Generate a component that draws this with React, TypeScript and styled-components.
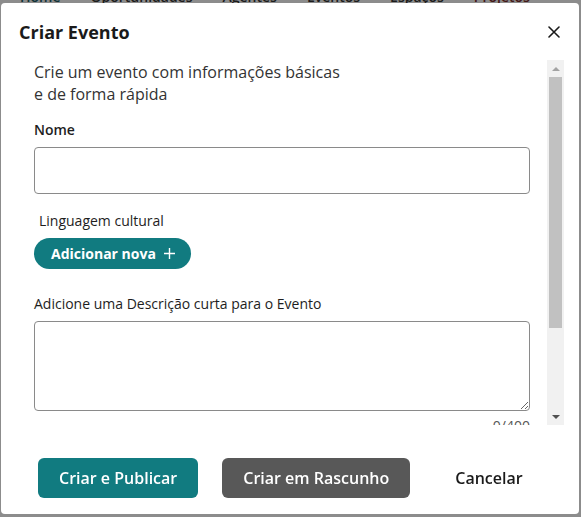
import React from "react";
import styled, { createGlobalStyle } from "styled-components";

const Global = createGlobalStyle`
  html, body { margin: 0; padding: 0; background: #fff; }
  body { font-family: "Open Sans", "Noto Sans", sans-serif; }
  * { box-sizing: border-box; }
`;

const Page = styled.div`
  width: 581px;
  height: 517px;
  background: #fff;
  overflow: hidden;
`;

const Nav = styled.nav`
  display: flex;
  gap: 30px;
  padding-left: 20px;
  height: 4px;
  overflow: hidden;
  font-size: 14px;
  font-weight: 600;
`;

const NavItem = styled.span<{ $color?: string }>`
  display: block;
  line-height: 14px;
  margin-top: -10px;
  color: ${(p) => p.$color || "#333"};
  white-space: nowrap;
`;

const Overlay = styled.div`
  position: fixed;
  inset: 0;
  background: rgba(0, 0, 0, 0.45);
  display: flex;
  align-items: center;
  padding-left: 1px;
`;

const Modal = styled.div`
  width: 578px;
  height: 511px;
  background: #fff;
  border-radius: 4px;
  display: flex;
  flex-direction: column;
  color: #1e1e1e;
`;

const Header = styled.div`
  height: 57px;
  flex: none;
  display: flex;
  align-items: center;
  justify-content: space-between;
  padding: 0 19px 0 18px;
`;

const Title = styled.h2`
  margin: 0;
  font-size: 18px;
  font-weight: 700;
  color: #1a1a1a;
`;

const CloseBtn = styled.button`
  border: 0;
  background: none;
  padding: 0;
  width: 13px;
  height: 13px;
  display: flex;
  align-items: center;
  justify-content: center;
  color: #1a1a1a;
  cursor: pointer;
`;

const Body = styled.div`
  flex: 1;
  min-height: 0;
  display: flex;
  margin-right: 15px;
`;

const ScrollContent = styled.div`
  flex: 1;
  min-width: 0;
  overflow: hidden;
  padding: 1px 17px 0 33px;
`;

const Scrollbar = styled.div`
  width: 17px;
  flex: none;
  background: #f1f1f1;
  display: flex;
  flex-direction: column;
`;

const ScrollArrow = styled.div<{ $dir: "up" | "down" }>`
  height: 17px;
  flex: none;
  display: flex;
  align-items: center;
  justify-content: center;
  color: ${(p) => (p.$dir === "up" ? "#a3a3a3" : "#505050")};
`;

const ScrollThumb = styled.div`
  height: 251px;
  margin: 0 2px;
  background: #c1c1c1;
`;

const ScrollSpacer = styled.div`
  flex: 1;
`;

const Intro = styled.p`
  margin: 0;
  font-size: 16px;
  line-height: 22px;
  color: #333;
`;

const Field = styled.div<{ $top: number }>`
  display: flex;
  flex-direction: column;
  align-items: flex-start;
  gap: 7px;
  margin-top: ${(p) => p.$top}px;
`;

const Label = styled.label<{ $weight?: number; $indent?: number }>`
  font-size: 14px;
  line-height: 20px;
  font-weight: ${(p) => p.$weight || 400};
  color: #1e1e1e;
  padding-left: ${(p) => p.$indent || 0}px;
`;

const Input = styled.input`
  width: 100%;
  height: 47px;
  border: 1px solid #8a8a8a;
  border-radius: 4px;
  font: inherit;
  font-size: 14px;
  padding: 0 12px;
  outline: none;
`;

const TextArea = styled.textarea`
  width: 100%;
  height: 90px;
  border: 1px solid #8a8a8a;
  border-radius: 4px;
  font: inherit;
  font-size: 14px;
  padding: 8px 12px;
  outline: none;
  display: block;
`;

const Counter = styled.div`
  margin-top: 5px;
  text-align: right;
  font-size: 14px;
  line-height: 20px;
  color: #555;
`;

const PillButton = styled.button`
  height: 31px;
  border: 0;
  border-radius: 16px;
  background: #117b80;
  color: #fff;
  font-family: inherit;
  font-size: 14px;
  font-weight: 700;
  padding: 0 16px 0 17px;
  display: flex;
  align-items: center;
  gap: 8px;
  cursor: pointer;
`;

const Footer = styled.div`
  height: 89px;
  flex: none;
  display: flex;
  align-items: flex-start;
  gap: 24px;
  padding: 33px 0 0 37px;
`;

const ActionButton = styled.button<{ $variant: "primary" | "secondary" | "ghost" }>`
  height: 40px;
  border: 0;
  border-radius: 6px;
  padding: 0 21px;
  font-family: inherit;
  font-size: 16px;
  font-weight: 600;
  cursor: pointer;
  background: ${(p) =>
    p.$variant === "primary" ? "#117b80" : p.$variant === "secondary" ? "#585858" : "transparent"};
  color: ${(p) => (p.$variant === "ghost" ? "#1a1a1a" : "#fff")};
`;

export default function App() {
  return (
    <>
      <Global />
      <Page>
        <Nav>
          <NavItem $color="#1b5b63">Home</NavItem>
          <NavItem>Oportunidades</NavItem>
          <NavItem>Agentes</NavItem>
          <NavItem>Eventos</NavItem>
          <NavItem>Espaços</NavItem>
          <NavItem $color="#7a2a2a">Projetos</NavItem>
        </Nav>
        <Overlay>
          <Modal>
            <Header>
              <Title>Criar Evento</Title>
              <CloseBtn aria-label="Fechar">
                <svg width="12" height="12" viewBox="0 0 12 12">
                  <path d="M1 1 L11 11 M11 1 L1 11" stroke="currentColor" strokeWidth="1.6" strokeLinecap="round" />
                </svg>
              </CloseBtn>
            </Header>
            <Body>
              <ScrollContent>
                <Intro>
                  Crie um evento com informações básicas
                  <br />e de forma rápida
                </Intro>
                <Field $top={15}>
                  <Label $weight={600}>Nome</Label>
                  <Input />
                </Field>
                <Field $top={17}>
                  <Label $indent={5}>Linguagem cultural</Label>
                  <PillButton>
                    Adicionar nova
                    <svg width="11" height="11" viewBox="0 0 11 11">
                      <path d="M5.5 0 V11 M0 5.5 H11" stroke="currentColor" strokeWidth="1.4" />
                    </svg>
                  </PillButton>
                </Field>
                <Field $top={25}>
                  <Label>Adicione uma Descrição curta para o Evento</Label>
                  <TextArea />
                </Field>
                <Counter>0/400</Counter>
              </ScrollContent>
              <Scrollbar aria-hidden="true">
                <ScrollArrow $dir="up">
                  <svg width="8" height="4" viewBox="0 0 8 4">
                    <path d="M0 4 L4 0 L8 4 Z" fill="currentColor" />
                  </svg>
                </ScrollArrow>
                <ScrollThumb />
                <ScrollSpacer />
                <ScrollArrow $dir="down">
                  <svg width="8" height="4" viewBox="0 0 8 4">
                    <path d="M0 0 L8 0 L4 4 Z" fill="currentColor" />
                  </svg>
                </ScrollArrow>
              </Scrollbar>
            </Body>
            <Footer>
              <ActionButton $variant="primary">Criar e Publicar</ActionButton>
              <ActionButton $variant="secondary">Criar em Rascunho</ActionButton>
              <ActionButton $variant="ghost">Cancelar</ActionButton>
            </Footer>
          </Modal>
        </Overlay>
      </Page>
    </>
  );
}
